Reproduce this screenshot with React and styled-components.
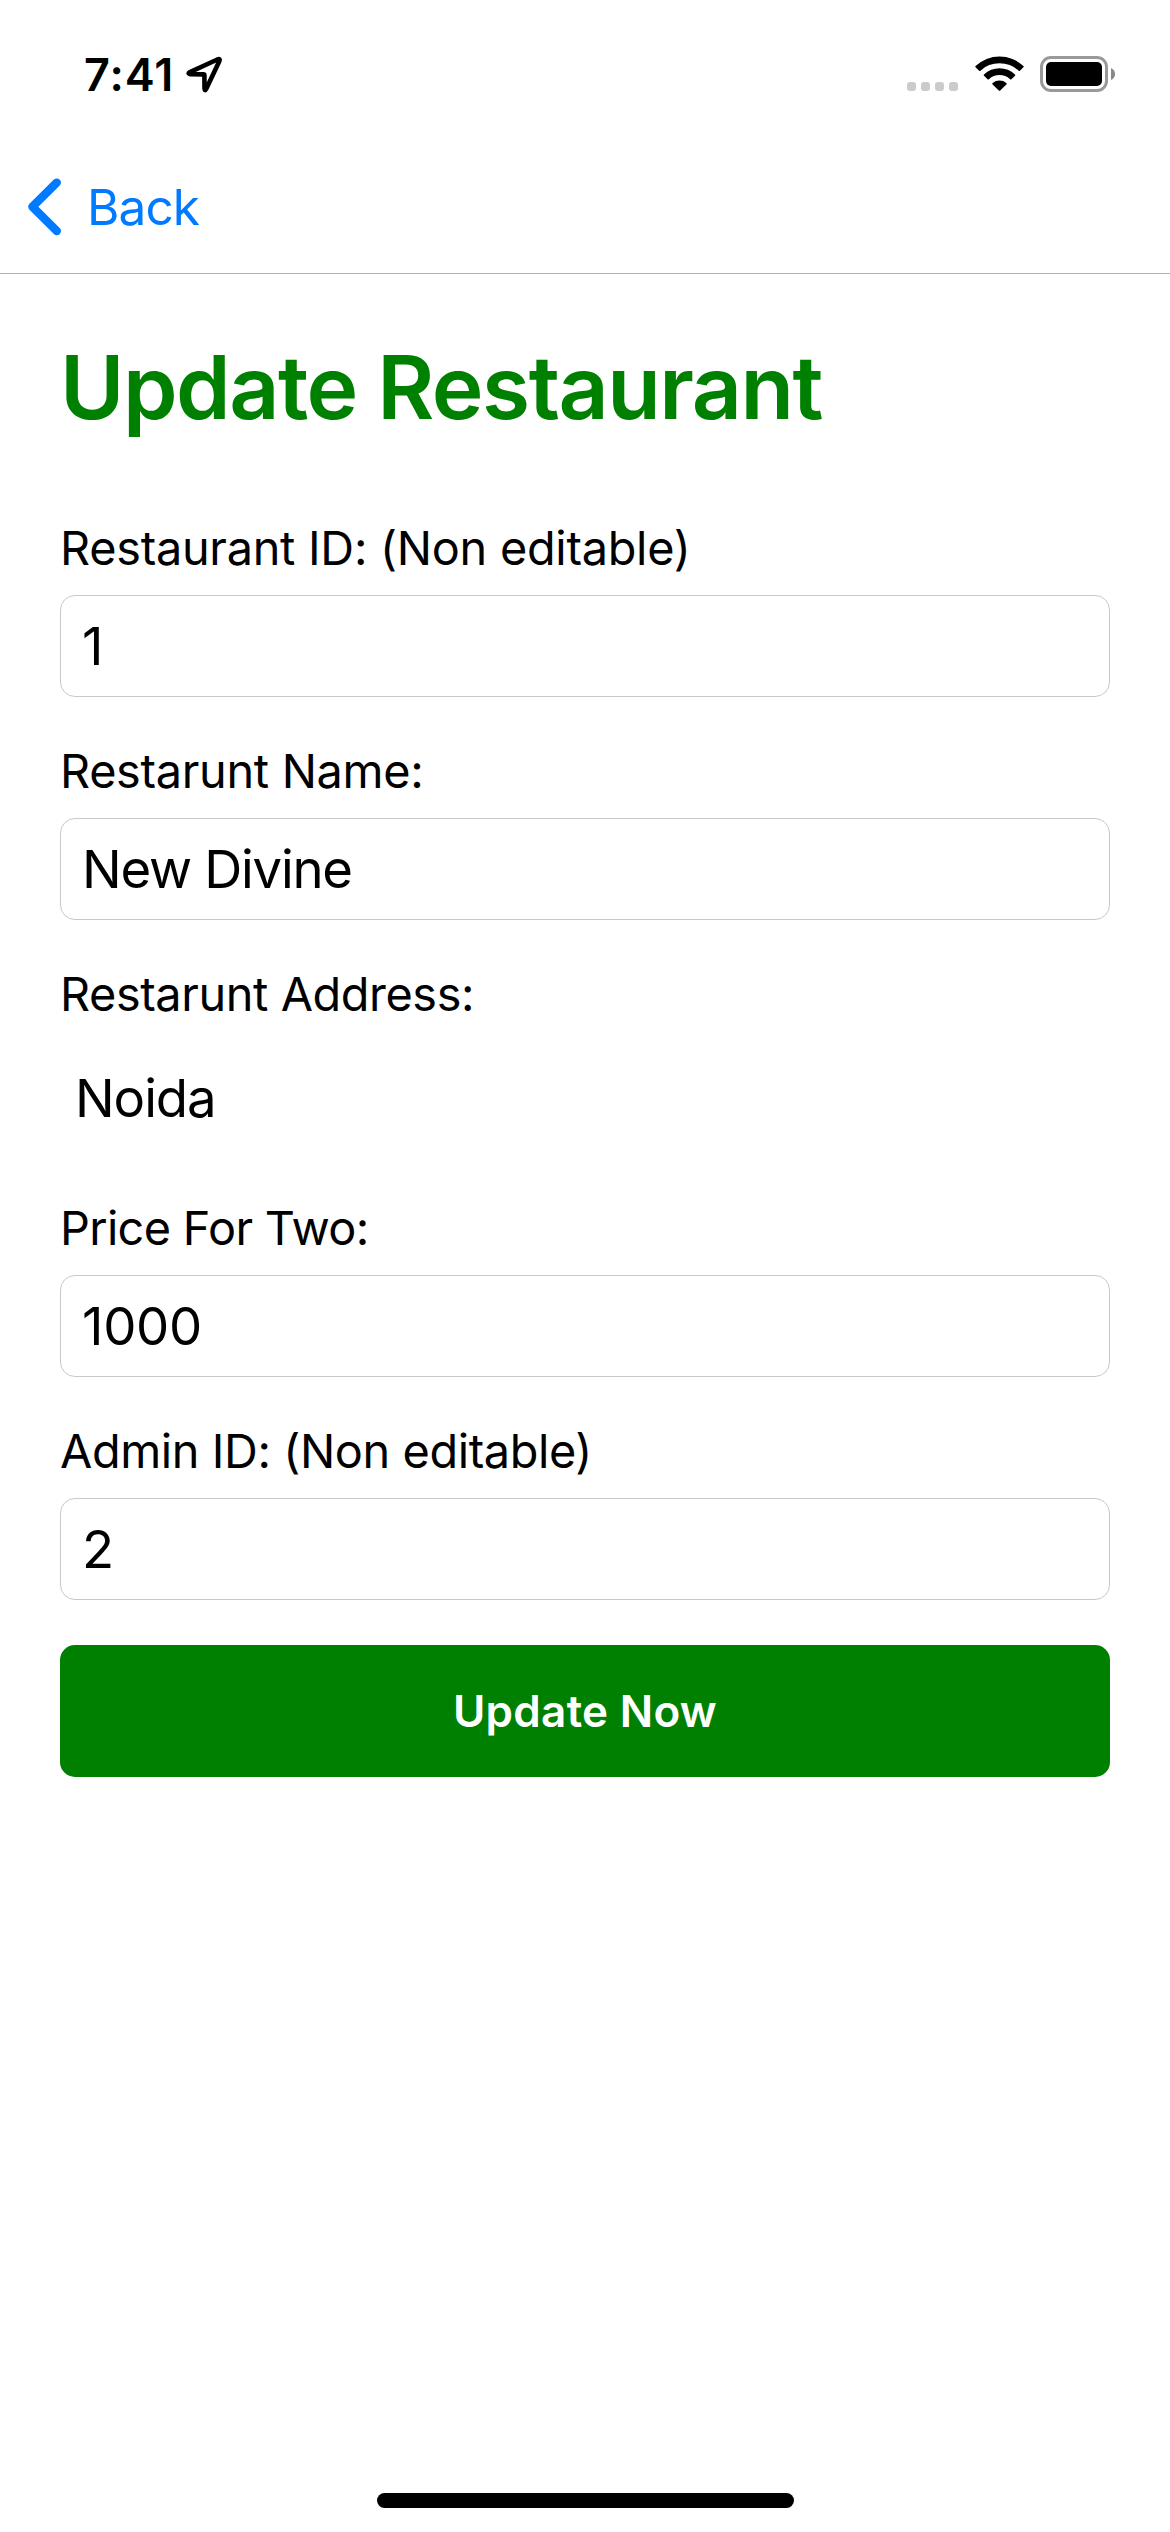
import React from "react";
import styled, { createGlobalStyle } from "styled-components";

const GlobalStyle = createGlobalStyle`
  * { box-sizing: border-box; }
  body {
    margin: 0;
    background: #fff;
    color: #000;
    font-family: Inter, "Liberation Sans", sans-serif;
  }
`;

const Screen = styled.div`
  display: flex;
  flex-direction: column;
  width: 1170px;
  height: 2532px;
  background: #fff;
`;

const StatusBar = styled.div`
  display: flex;
  justify-content: space-between;
  align-items: center;
  height: 141px;
  padding: 8px 55px 0 84px;
`;

const StatusGroup = styled.div`
  display: flex;
  align-items: center;
`;

const Clock = styled.div`
  width: 102px;
  font-size: 45px;
  line-height: 60px;
  font-weight: 600;
  letter-spacing: 1px;
`;

const ArrowIcon = styled.svg`
  width: 38px;
  height: 37px;
`;

const Signal = styled.div`
  display: flex;
  gap: 5px;
  margin: 24px 17px 0 0;
`;

const SignalDot = styled.span`
  width: 9px;
  height: 9px;
  border-radius: 3px;
  background: #cbcbcb;
`;

const WifiIcon = styled.svg`
  width: 49px;
  height: 37px;
  margin-right: 16px;
  margin-top: -2px;
`;

const BatteryIcon = styled.svg`
  width: 75px;
  height: 37px;
`;

const NavBar = styled.nav`
  display: flex;
  align-items: center;
  height: 133px;
  padding-left: 28px;
  border-bottom: 1px solid #b2b2b2;
`;

const BackLink = styled.a`
  display: flex;
  align-items: center;
  gap: 26px;
  color: #007aff;
  font-size: 49.5px;
  line-height: 60px;
  letter-spacing: -0.9px;
`;

const Form = styled.main`
  display: flex;
  flex-direction: column;
  gap: 45px;
  padding: 59px 60px 0;
`;

const Title = styled.h1`
  margin: 0 0 33px;
  color: #008000;
  font-size: 87.5px;
  line-height: 108px;
  font-weight: 600;
  letter-spacing: -1.48px;
  white-space: nowrap;
`;

const Field = styled.div`
  display: flex;
  flex-direction: column;
  gap: 18px;
`;

const Label = styled.div`
  font-size: 46.8px;
  line-height: 58px;
  letter-spacing: ${(p) => p.$tracking}px;
  white-space: nowrap;
`;

const Value = styled.div`
  display: flex;
  align-items: center;
  height: 102px;
  padding-left: 21px;
  border: 1px solid #c8c8ca;
  border-radius: 15px;
  font-size: 52.7px;
  line-height: 62px;
  letter-spacing: ${(p) => p.$tracking}px;
`;

const PlainValue = styled(Value)`
  height: 113px;
  padding-left: 15px;
  border: 0;
`;

const SubmitButton = styled.button`
  height: 132px;
  padding: 0;
  border: 0;
  border-radius: 15px;
  background: #008000;
  color: #fff;
  font-family: inherit;
  font-size: 44px;
  line-height: 54px;
  font-weight: 600;
  letter-spacing: 0.29px;
`;

const HomeIndicator = styled.div`
  align-self: center;
  width: 417px;
  height: 15px;
  margin: auto 0 24px;
  border-radius: 8px;
  background: #000;
`;

const fields = [
  { label: "Restaurant ID: (Non editable)", labelTracking: -0.26, value: "1", tracking: 0 },
  { label: "Restarunt Name:", labelTracking: -0.3, value: "New Divine", tracking: -1.26 },
  { label: "Restarunt Address:", labelTracking: -0.4, value: "Noida", tracking: -1.08, plain: true },
  { label: "Price For Two:", labelTracking: -0.65, value: "1000", tracking: -0.3 },
  { label: "Admin ID: (Non editable)", labelTracking: -0.38, value: "2", tracking: 0 },
];

function LocationArrow() {
  return (
    <ArrowIcon viewBox="0 0 38 37" fill="none">
      <path
        d="M3.9 16.1 L31.4 3.5 Q34.6 2.2 33.2 5.4 L20.4 32.6 Q18.9 35.8 18.5 32.2 L18.4 19.4 Q18.4 18.4 17.4 18.4 L4.5 18.3 Q1.1 17.6 3.9 16.1 Z"
        stroke="#000"
        strokeWidth="4.6"
        strokeLinejoin="round"
      />
    </ArrowIcon>
  );
}

function Wifi() {
  return (
    <WifiIcon viewBox="0 0 49 37">
      <path d="M0.6 11.1 A34.5 34.5 0 0 1 48.4 11.1 Q49 11.7 48.4 12.3 L44.9 15.7 Q44.3 16.3 43.6 15.7 A28 28 0 0 0 5.4 15.7 Q4.7 16.3 4.1 15.7 L0.6 12.3 Q0 11.7 0.6 11.1 Z" />
      <path d="M9 19.4 A22.5 22.5 0 0 1 40 19.4 Q40.7 20 40 20.7 L36.4 24.2 Q35.8 24.8 35.1 24.2 A15.8 15.8 0 0 0 13.9 24.2 Q13.2 24.8 12.6 24.2 L9 20.7 Q8.3 20 9 19.4 Z" />
      <path d="M17.6 28 A10.8 10.8 0 0 1 31.4 28 Q32.1 28.7 31.4 29.4 L25.2 35.5 Q24.5 36.2 23.8 35.5 L17.6 29.4 Q16.9 28.7 17.6 28 Z" />
    </WifiIcon>
  );
}

function Battery() {
  return (
    <BatteryIcon viewBox="0 0 75 37">
      <rect x="1.5" y="1.5" width="65" height="33" rx="9.5" fill="none" stroke="#999" strokeWidth="3" />
      <rect x="6" y="6" width="56" height="24" rx="5" />
      <path d="M71 12 Q75 14 75 18 Q75 22 71 24 Z" fill="#888" />
    </BatteryIcon>
  );
}

function Chevron() {
  return (
    <svg width="33" height="58" viewBox="0 0 33 58" fill="none">
      <path d="M28.8 4.6 L4.4 28.8 L28.8 53" stroke="#007aff" strokeWidth="8.4" strokeLinecap="round" strokeLinejoin="round" />
    </svg>
  );
}

export default function App() {
  return (
    <Screen>
      <GlobalStyle />
      <StatusBar>
        <StatusGroup>
          <Clock>7:41</Clock>
          <LocationArrow />
        </StatusGroup>
        <StatusGroup>
          <Signal>
            <SignalDot />
            <SignalDot />
            <SignalDot />
            <SignalDot />
          </Signal>
          <Wifi />
          <Battery />
        </StatusGroup>
      </StatusBar>
      <NavBar>
        <BackLink>
          <Chevron />
          Back
        </BackLink>
      </NavBar>
      <Form>
        <Title>Update Restaurant</Title>
        {fields.map((field) => {
          const Text = field.plain ? PlainValue : Value;
          return (
            <Field key={field.label}>
              <Label $tracking={field.labelTracking}>{field.label}</Label>
              <Text $tracking={field.tracking}>{field.value}</Text>
            </Field>
          );
        })}
        <SubmitButton>Update Now</SubmitButton>
      </Form>
      <HomeIndicator />
    </Screen>
  );
}
